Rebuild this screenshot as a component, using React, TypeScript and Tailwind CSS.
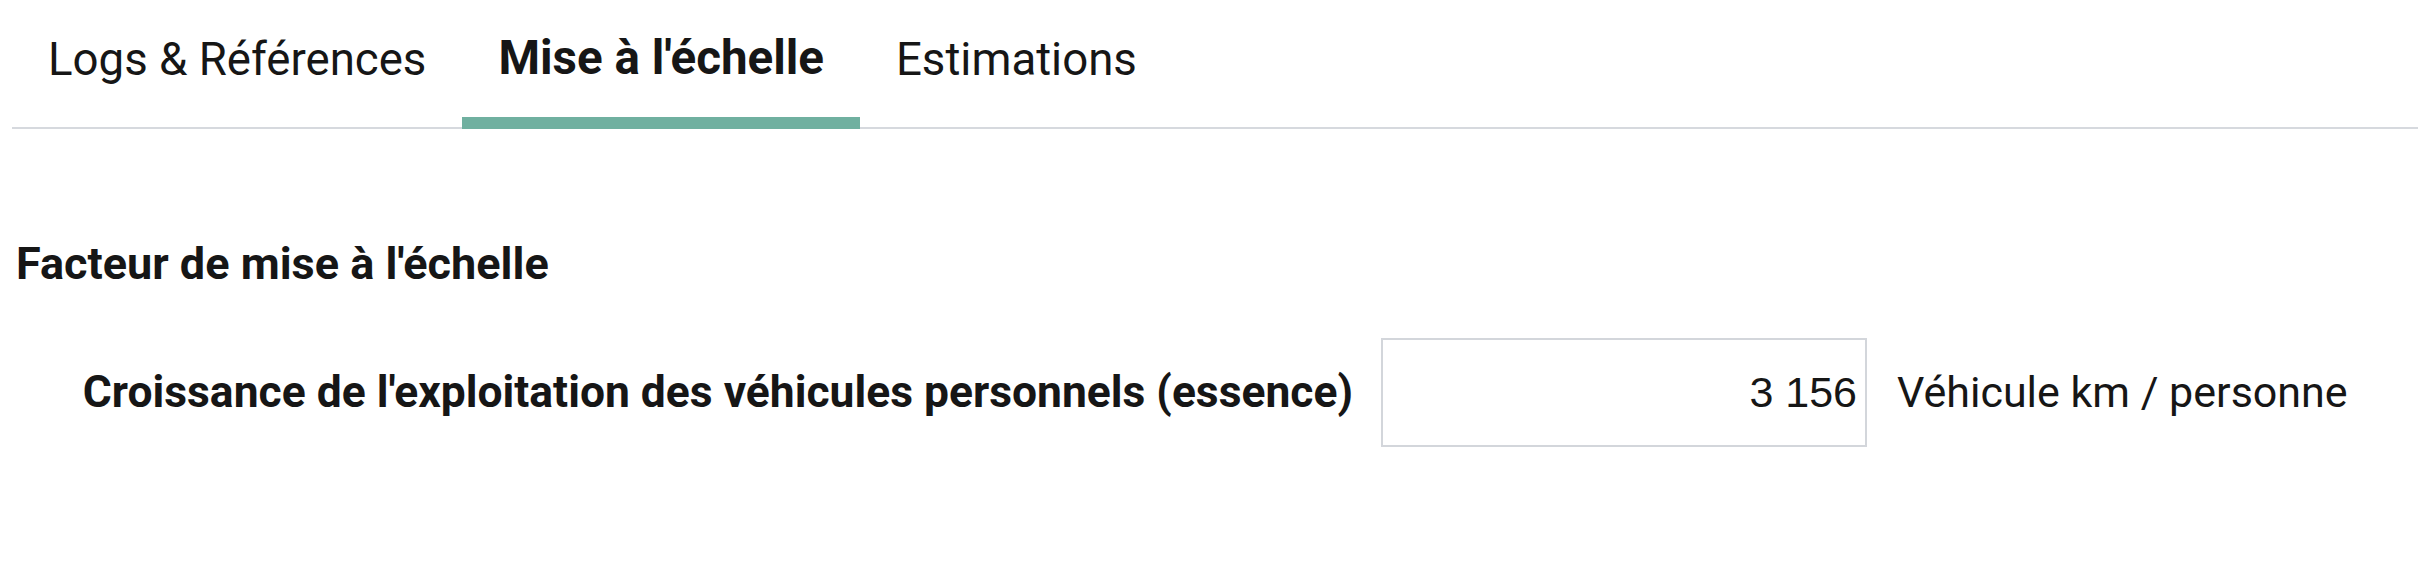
import React from 'react';

const TABS = ['Logs & Références', "Mise à l'échelle", 'Estimations'];

const App: React.FC = () => {
  const active = 1;
  return (
    <div className="w-full h-[584px] bg-white font-['Roboto',sans-serif] text-[#161616]">
      {/* Tabs */}
      <div className="ml-[12px] flex border-b-2 border-[#d6d9de]">
        {TABS.map((tab, i) => (
          <div
            key={tab}
            className={
              i === active
                ? 'relative h-[127px] px-[36px] pt-[36px] text-[47.5px] leading-[45px] font-bold whitespace-nowrap'
                : 'relative h-[127px] px-[36px] pt-[37px] text-[45.6px] leading-[45px] whitespace-nowrap'
            }
          >
            {tab}
            {i === active && (
              <span className="absolute left-0 right-0 bottom-[-2px] h-[12px] bg-[#70b0a0]" />
            )}
          </div>
        ))}
      </div>

      {/* Content */}
      <div className="pl-[16px] pt-[112px]">
        <h2 className="text-[45px] leading-[45px] font-bold">Facteur de mise à l'échelle</h2>
      </div>

      <div className="mt-[52px] flex items-center">
        <div className="w-[1353px] pl-[82px] text-right text-[44.4px] leading-[45px] font-bold whitespace-nowrap">
          Croissance de l'exploitation des véhicules personnels (essence)
        </div>
        <div className="ml-[28px] w-[486px] h-[109px] border-2 border-[#d3d6db] flex items-center justify-end pr-[8px] font-['Liberation_Sans',Arial,sans-serif] text-[43px]">
          3 156
        </div>
        <div className="ml-[30px] text-[43px] leading-[45px] whitespace-nowrap">Véhicule km / personne</div>
      </div>
    </div>
  );
};

export default App;
